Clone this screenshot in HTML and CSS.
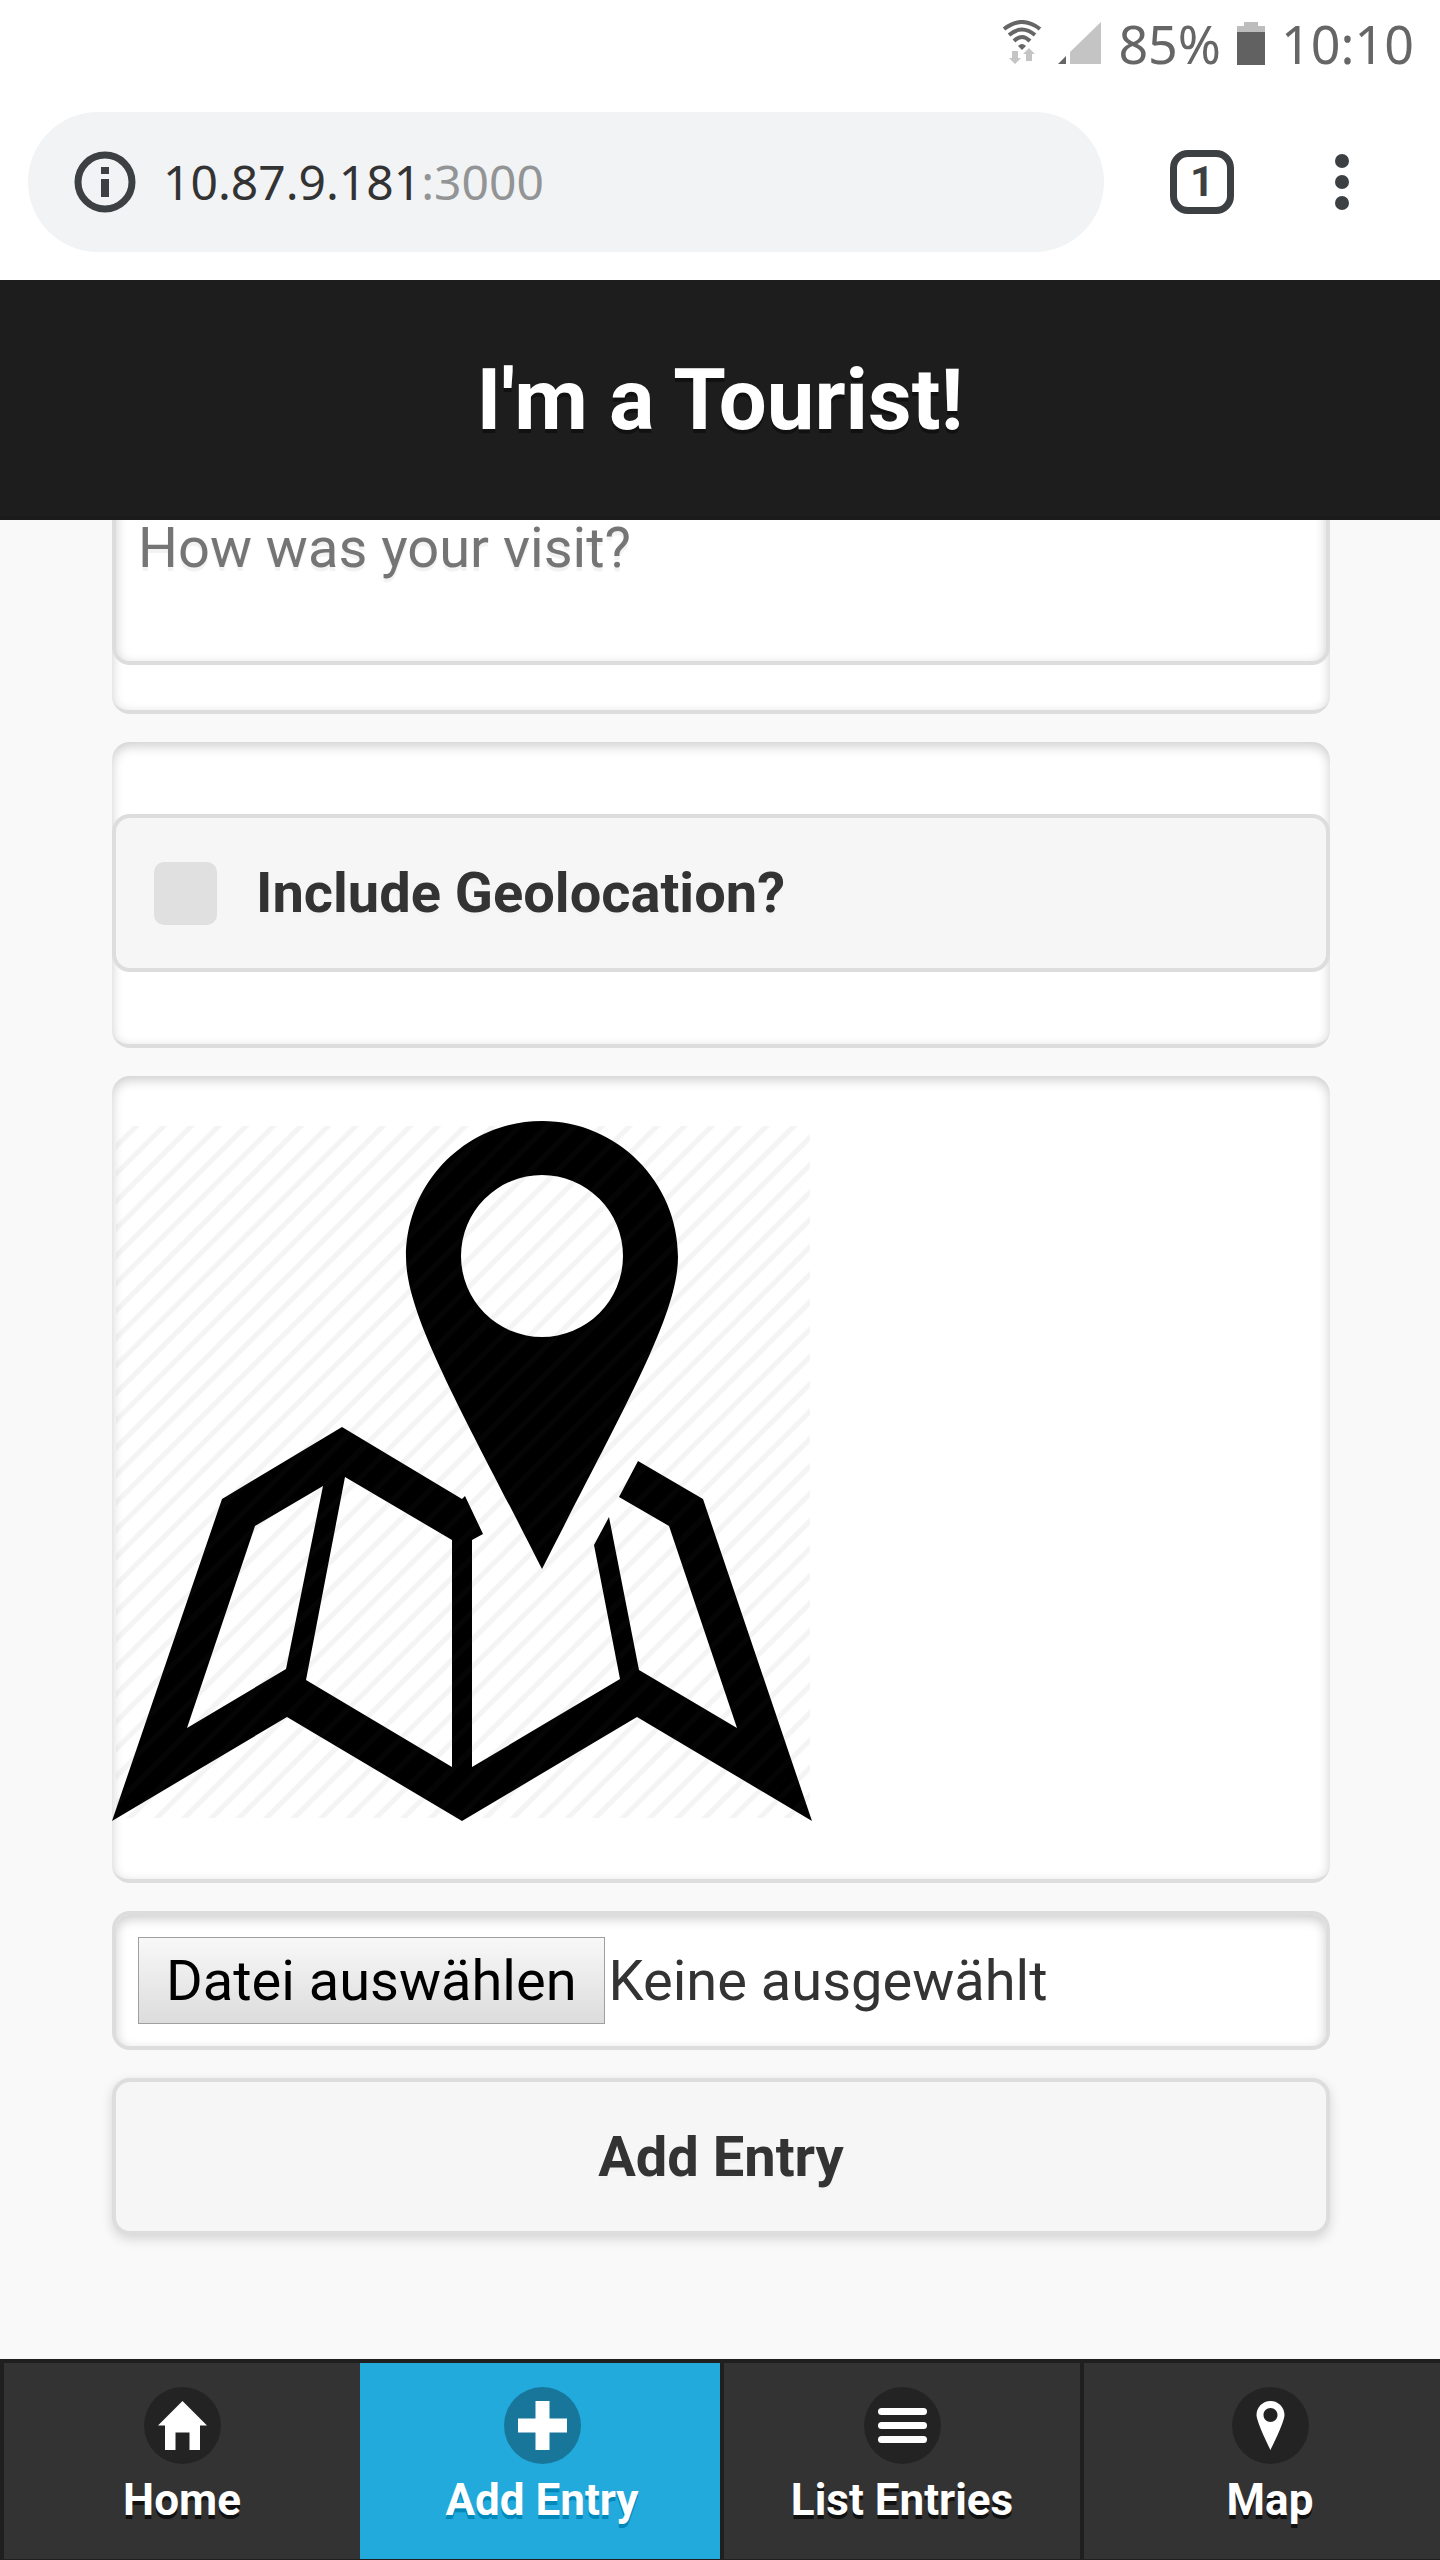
FILE: index.html
```html
<!DOCTYPE html>
<html lang="de">
<head>
<meta charset="utf-8">
<meta name="viewport" content="width=device-width, initial-scale=1">
<title>I'm a Tourist!</title>
<link rel="stylesheet" href="styles.css">
</head>
<body>
<div class="screen">
  <div class="status">
    <svg width="40" height="48" viewBox="0 0 40 48" aria-hidden="true">
      <g fill="none" stroke="#666" stroke-width="4">
        <path d="M2 9Q20 -5 38 9"/>
        <path d="M7 15Q20 4 33 15"/>
        <path d="M12 21Q20 13 28 21"/>
      </g>
      <path d="M16 26Q20 22 24 26L20 30Z" fill="#666"/>
      <path d="M10 31H16V38H19L13 44L7 38H10Z" fill="#c4c4c4"/>
      <path d="M24 41H30V34H33L27 28L21 34H24Z" fill="#c4c4c4"/>
    </svg>
    <svg width="44" height="44" viewBox="0 0 44 44" aria-hidden="true">
      <path d="M12 42V30L43 0V42Z" fill="#c4c4c4"/>
      <path d="M0 42L8 34V42Z" fill="#666"/>
    </svg>
    <span>85%</span>
    <svg width="28" height="44" viewBox="0 0 28 44" aria-hidden="true">
      <path d="M0 4H7V0H21V4H28V12H0Z" fill="#bdbdbd"/>
      <path d="M0 10H28V43H0Z" fill="#616161"/>
    </svg>
    <span>10:10</span>
  </div>
  <div class="toolbar">
    <div class="address">
      <svg width="62" height="62" viewBox="0 0 62 62" aria-hidden="true">
        <circle cx="31" cy="31" r="27" fill="none" stroke="#3c4043" stroke-width="7"/>
        <path d="M27 16H35V23H27ZM27 28H35V46H27Z" fill="#3c4043"/>
      </svg>
      <span>10.87.9.181<span class="port">:3000</span></span>
    </div>
    <button class="tabs" type="button">1</button>
    <button class="menu" type="button" aria-label="Menü">
      <svg width="14" height="56" viewBox="0 0 14 56"><g fill="#3c4043"><circle cx="7" cy="7" r="7"/><circle cx="7" cy="28" r="7"/><circle cx="7" cy="49" r="7"/></g></svg>
    </button>
  </div>

  <header class="header"><h1>I'm a Tourist!</h1></header>

  <main class="content">
    <form class="form">
      <div class="card note-card">
        <textarea class="note" placeholder="How was your visit?" aria-label="How was your visit?"></textarea>
      </div>
      <div class="card geo-card">
        <label class="geo" for="geo"><input type="checkbox" id="geo">Include Geolocation?</label>
      </div>
      <div class="card photo-card">
        <svg class="photo" width="700" height="700" viewBox="0 0 700 700" role="img" aria-label="Map">
          <defs>
            <pattern id="dark" width="27.4" height="27.4" patternUnits="userSpaceOnUse">
              <path d="M-5 7L7 -5M-5 34.4L34.4 -5M20 36.8L36.8 20" stroke="#000" stroke-opacity=".045" stroke-width="5"/>
            </pattern>
            <pattern id="light" width="27.4" height="27.4" patternUnits="userSpaceOnUse">
              <path d="M-5 7L7 -5M-5 34.4L34.4 -5M20 36.8L36.8 20" stroke="#fff" stroke-opacity=".018" stroke-width="5"/>
            </pattern>
            <g id="art" fill-rule="evenodd">
              <path d="M430 0C505 0 566 61 566 136C566 195 510 290 430 448C350 290 294 195 294 136C294 61 355 0 430 0ZM430 54A81 81 0 1 0 430 216A81 81 0 1 0 430 54Z"/>
              <path d="M0 700L110 378L230 306L350 378L353 375L371 413L360 419V646L508 558L482 424L497 396L527 549L625 607L557 405L507 376L526 340L591 378L700 700L525 596L350 700L175 596ZM143 405L75 607L174 548L211 365ZM233 356L194 559L340 646V419Z"/>
            </g>
          </defs>
          <rect x="4" y="5" width="694" height="692" fill="url(#dark)"/>
          <use href="#art" fill="#000"/>
          <use href="#art" fill="url(#light)"/>
        </svg>
      </div>
      <div class="file">
        <input class="file-input" type="file" id="photo">
        <label class="file-button" for="photo">Datei auswählen</label>
        <span>Keine ausgewählt</span>
      </div>
      <button class="submit" type="button">Add Entry</button>
    </form>
  </main>

  <nav class="nav">
    <a href="#home">
      <svg width="77" height="77" viewBox="-4 -4 22 22" aria-hidden="true"><circle class="disc" cx="7" cy="7" r="11"/><path d="M7 0L0 7H2V14H5V9H9V14H12V7H14Z"/></svg>
      <span>Home</span>
    </a>
    <a href="#add" class="active" aria-current="page">
      <svg width="77" height="77" viewBox="-4 -4 22 22" aria-hidden="true"><circle class="disc" cx="7" cy="7" r="11"/><path d="M14 5H9V0H5V5H0V9H5V14H9V9H14Z"/></svg>
      <span>Add Entry</span>
    </a>
    <a href="#list">
      <svg width="77" height="77" viewBox="-4 -4 22 22" aria-hidden="true"><circle class="disc" cx="7" cy="7" r="11"/><rect y="2" width="14" height="2" rx="1"/><rect y="6" width="14" height="2" rx="1"/><rect y="10" width="14" height="2" rx="1"/></svg>
      <span>List Entries</span>
    </a>
    <a href="#map">
      <svg width="77" height="77" viewBox="-4 -4 22 22" aria-hidden="true"><circle class="disc" cx="7" cy="7" r="11"/><path d="M7 0C4.791 0 3 1.791 3 4C3 6 7 14 7 14S11 6 11 4C11 1.791 9.209 0 7 0ZM7 6C5.896 6 5 5.104 5 4S5.896 2 7 2S9 2.896 9 4S8.104 6 7 6Z"/></svg>
      <span>Map</span>
    </a>
  </nav>
</div>
</body>
</html>
```
FILE: styles.css
```css
* {
  box-sizing: border-box;
}

body {
  margin: 0;
  background: #f9f9f9;
  color: #333;
  font-family: Roboto, sans-serif;
  font-size: 56px;
  line-height: 72px;
}

button,
textarea {
  font: inherit;
  color: inherit;
  margin: 0;
}

svg {
  display: block;
  flex: none;
}

.screen {
  display: flex;
  flex-direction: column;
  min-height: 100vh;
}

/* Browser chrome */
.status {
  display: flex;
  align-items: center;
  justify-content: flex-end;
  gap: 16px;
  height: 88px;
  padding-right: 26px;
  background: #fff;
  color: #666;
  font-family: "Noto Sans", sans-serif;
  font-size: 52px;
}

.toolbar {
  display: flex;
  align-items: center;
  padding: 24px 91px 28px 28px;
  background: #fff;
}

.address {
  display: flex;
  flex: 1;
  align-items: center;
  gap: 27px;
  height: 140px;
  padding-left: 46px;
  border-radius: 70px;
  background: #f1f3f5;
  font-family: "Noto Sans", sans-serif;
  font-size: 48px;
}

.port {
  color: #939495;
}

.tabs {
  width: 64px;
  height: 64px;
  margin: 0 101px 0 66px;
  padding: 0;
  border: 7px solid #3c4043;
  border-radius: 18px;
  background: none;
  color: #3c4043;
  font-size: 42px;
  font-weight: 700;
  line-height: 48px;
}

.menu {
  padding: 0;
  border: 0;
  background: none;
}

/* App header */
.header {
  position: relative;
  z-index: 1;
  padding: 68px 0 64px;
  border-bottom: 4px solid #1b1b1b;
  background: #1d1d1d;
  color: #fff;
  text-align: center;
  text-shadow: 0 4px 0 #111;
}

.header h1 {
  margin: 0;
  font-size: 85px;
  line-height: 104px;
}

/* Entry form */
.content {
  flex: 1;
  padding: 0 110px 124px 112px;
  text-shadow: 0 4px 0 #f3f3f3;
}

.form {
  display: flex;
  flex-direction: column;
  gap: 28px;
  margin-top: -64px;
}

.card {
  border-bottom: 4px solid #ddd;
  border-radius: 18px;
  background: #fff;
  box-shadow: inset 0 4px 12px rgba(0, 0, 0, .2);
}

.note-card {
  padding: 28px 0 45px;
}

.note {
  display: block;
  width: 100%;
  height: 181px;
  padding: 24px 22px;
  border: 4px solid #ddd;
  border-radius: 18px;
  background: #fff;
  box-shadow: inset 0 4px 12px rgba(0, 0, 0, .2);
  text-shadow: inherit;
  resize: none;
}

.note::placeholder {
  color: #757575;
}

.geo-card {
  padding: 72px 0;
}

.geo {
  display: flex;
  align-items: center;
  gap: 39px;
  height: 158px;
  padding: 0 38px;
  border: 4px solid #ddd;
  border-radius: 18px;
  background: #f6f6f6;
  font-weight: 700;
}

.geo input {
  appearance: none;
  width: 63px;
  height: 63px;
  margin: 0;
  border-radius: 10px;
  background: #e0e0e0;
}

.geo input:checked {
  background: #22aadd;
}

.photo-card {
  padding: 45px 0 58px;
}

.file {
  display: flex;
  align-items: center;
  gap: 4px;
  padding: 22px;
  border: 4px solid #ddd;
  border-radius: 18px;
  background: #fff;
  box-shadow: inset 0 4px 12px rgba(0, 0, 0, .2);
  text-shadow: none;
}

.file-input {
  position: absolute;
  width: 1px;
  height: 1px;
  opacity: 0;
}

.file-button {
  padding: 7px 27px 6px;
  border: 1px solid #9f9f9f;
  background: linear-gradient(#f8f8f8, #dcdcdc);
  color: #000;
}

.submit {
  height: 157px;
  border: 4px solid #ddd;
  border-radius: 18px;
  background: #f6f6f6;
  box-shadow: 0 4px 12px rgba(0, 0, 0, .15);
  font-weight: 700;
  text-shadow: 0 4px 0 #f3f3f3;
}

/* Bottom navigation */
.nav {
  display: grid;
  grid-template-columns: repeat(4, minmax(0, 1fr));
  border-top: 4px solid #1f1f1f;
  border-bottom: 1px solid #1f1f1f;
  background: #333;
}

.nav a {
  display: flex;
  flex-direction: column;
  align-items: center;
  gap: 8px;
  padding: 24px 0 31px;
  border-left: 4px solid #1f1f1f;
  color: #fff;
  font-size: 44px;
  font-weight: 700;
  line-height: 56px;
  text-decoration: none;
  text-shadow: 0 4px 0 #111;
}

.nav a:last-child {
  padding-left: 16px;
}

.nav a.active {
  border-color: #22aadd;
  background: #22aadd;
  text-shadow: 0 4px 0 #0088bb;
}

.nav svg {
  fill: #fff;
}

.nav .disc {
  fill: rgba(0, 0, 0, .3);
}
```
